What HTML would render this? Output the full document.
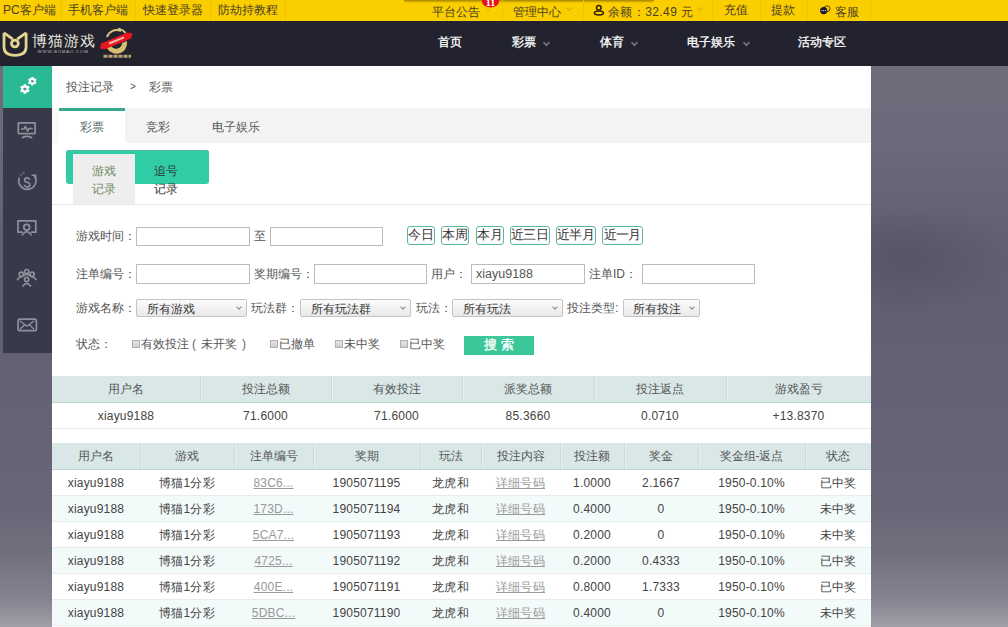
<!DOCTYPE html>
<html><head><meta charset="utf-8">
<style>
*{margin:0;padding:0;box-sizing:border-box}
html,body{width:1008px;height:627px;overflow:hidden}
body{font-family:"Liberation Sans",sans-serif;font-size:12px;color:#555;position:relative;background:#65616f}
.a{position:absolute;white-space:nowrap}
#bg{position:absolute;left:0;top:66px;width:1008px;height:561px;
background:radial-gradient(ellipse 110px 55px at 905px 192px,rgba(74,70,88,.45),rgba(74,70,88,0)),linear-gradient(180deg,#6f6c7c 0%,#6b6879 15%,#636073 30%,#615e70 40%,#646174 55%,#686577 78%,#72707e 87%,#868391 95%,#a09ea6 100%)}
#topbar{position:absolute;left:0;top:0;width:1008px;height:21px;background:#fbce00;color:#4a4124;font-size:12px}
#topbar .a{top:0;line-height:20px}
#topbar i.sep{position:absolute;top:0;width:1px;height:21px;background:#eec300}
#nav{position:absolute;left:0;top:21px;width:1008px;height:45px;background:#23232f}
#nav .a{top:0;line-height:43px;color:#fff;font-size:12.4px;-webkit-text-stroke:0.3px #fff}
.caret{display:inline-block;width:5px;height:5px;border-right:1px solid #888;border-bottom:1px solid #888;transform:rotate(45deg)}
#side{position:absolute;left:3px;top:66px;width:49px;height:287px;background:#393a49}
#side .on{position:absolute;left:0;top:0;width:49px;height:42px;background:#29ba95}
#panel{position:absolute;left:52px;top:66px;width:819px;height:561px;background:#fff}
#panel .a{color:#555}
.inp{position:absolute;height:19px;border:1px solid #bcbcbc;background:#fff}
.sel{position:absolute;height:18px;border:1px solid #c4c4c4;border-radius:2px;background:linear-gradient(#fcfcfc,#e9e9e9);color:#333}
.sel:after{content:"";position:absolute;right:5px;top:5px;width:3px;height:3px;border-right:1.2px solid #8a8a8a;border-bottom:1.2px solid #8a8a8a;transform:rotate(45deg)}
.btn{position:absolute;top:160px;height:19px;border:1px solid #5db7a0;border-radius:3px;color:#333;line-height:16px;text-align:center;font-size:13px;letter-spacing:-0.6px;text-indent:-0.6px}
.chk{display:inline-block;width:8px;height:8px;border:1px solid #b0b0b0;background:linear-gradient(#e4e4e4,#d0d0d0);margin-left:1px;margin-right:1px;vertical-align:0px}
table{position:absolute;left:0;border-collapse:collapse;table-layout:fixed;width:819px}
th{height:26px;background:#d9e8e7;font-weight:normal;color:#555;border-bottom:1px solid #bcd5d0;border-left:1px solid #cadcda;box-shadow:inset 1px 0 0 #e6f0ef;padding:2px 0 0}
th:first-child{border-left:none;box-shadow:none}
td{height:26px;text-align:center;color:#444;letter-spacing:0.2px;border-bottom:1px solid #e4eded;padding:2px 0 0}
tr.c td{background:#f3fafa}
td u{color:#999}
</style></head><body>
<div id="bg"></div>
<div id="topbar">
  <div class="a" style="left:404px;top:0;width:250px;height:3px;background:linear-gradient(rgba(90,70,0,.55),rgba(90,70,0,0));border-radius:0 0 3px 3px"></div>
  <span class="a" style="left:3px">PC客户端</span><i class="sep" style="left:61px"></i>
  <span class="a" style="left:68px">手机客户端</span><i class="sep" style="left:135px"></i>
  <span class="a" style="left:143px">快速登录器</span><i class="sep" style="left:210px"></i>
  <span class="a" style="left:218px">防劫持教程</span><i class="sep" style="left:285px"></i>
  <span class="a" style="left:432px;top:2px">平台公告</span><i class="sep" style="left:502px"></i>
  <span class="a" style="left:513px;top:2px">管理中心</span><i class="sep" style="left:583px"></i>
  <span class="a" style="left:608px;top:2px;letter-spacing:0.4px">余额：32.49 元</span><i class="sep" style="left:712px"></i>
  <span class="a" style="left:724px">充值</span><i class="sep" style="left:760px"></i>
  <span class="a" style="left:771px">提款</span><i class="sep" style="left:807px"></i>
  <span class="a" style="left:835px;top:2px">客服</span><i class="sep" style="left:870px"></i>
  <svg class="a" style="left:480px;top:0" width="22" height="14" viewBox="480 0 22 14">
   <ellipse cx="490.5" cy="1.5" rx="8.5" ry="6" fill="#e8101a"/>
   <text x="490.5" y="6.3" fill="#fff" font-family="Liberation Serif" font-weight="bold" font-size="10" text-anchor="middle">11</text>
   <path d="M486 9.5 L488 11.5 L490 9.5" fill="none" stroke="#d0a800" stroke-width="0.8"/>
  </svg>
  <svg class="a" style="left:565px;top:6px" width="8" height="6" viewBox="0 0 8 6"><path d="M1 1.5 L4 4.5 L7 1.5" fill="none" stroke="#c9a400" stroke-width="1"/></svg>
  <svg class="a" style="left:696px;top:6px" width="8" height="6" viewBox="0 0 8 6"><path d="M1 1.5 L4 4.5 L7 1.5" fill="none" stroke="#c9a400" stroke-width="1"/></svg>
  <svg class="a" style="left:592px;top:3px" width="14" height="14" viewBox="592 3 14 14">
   <circle cx="598.8" cy="7.8" r="2.3" fill="none" stroke="#2a2200" stroke-width="1.5"/>
   <ellipse cx="598.9" cy="13" rx="4.5" ry="1.9" fill="none" stroke="#2a2200" stroke-width="1.5"/>
  </svg>
  <svg class="a" style="left:817px;top:4px" width="16" height="14" viewBox="817 4 16 14">
   <circle cx="827" cy="8.8" r="3" fill="none" stroke="#5a4500" stroke-width="1"/>
   <circle cx="823.7" cy="10.6" r="3.6" fill="#1d1830"/>
   <circle cx="822" cy="10.6" r="0.55" fill="#fff"/><circle cx="823.7" cy="10.6" r="0.55" fill="#fff"/><circle cx="825.4" cy="10.6" r="0.55" fill="#fff"/>
  </svg>
</div>
<div id="nav">
  <svg class="a" style="left:0;top:0" width="140" height="45" viewBox="0 21 140 45">
   <g fill="none" stroke="#e2d592" stroke-width="2.8" stroke-linejoin="round">
    <path d="M4 32.8 V47 Q4 55.3 15 55.3 Q26.1 55.3 26.1 47 V32.8"/>
    <path d="M4 32.8 L12.8 39.2 M26.1 32.8 L17.2 39.2"/>
    <circle cx="14.9" cy="43.5" r="3.4"/>
   </g>
   <text x="32" y="46.3" fill="#ebe7dd" font-size="14.5" font-weight="300" letter-spacing="0.9">博猫游戏</text>
   <text x="37.6" y="53.3" fill="#b9b6b4" font-size="4.4" letter-spacing="0.75" font-family="Liberation Sans">WWW.BOMAO.COM</text>
   <g>
    <path d="M107 37 A10 10 0 0 1 121 31.2" fill="none" stroke="#d8c47c" stroke-width="2"/>
    <path d="M118 28.5 Q123 29.5 125.5 33" fill="none" stroke="#e0cf8e" stroke-width="1.6"/>
    <path d="M106 45 A10.5 10.5 0 0 0 127 41 L122 43 A6 6 0 0 1 111 46 Z" fill="#d7be6c"/>
    <path d="M101 43.5 L127.5 32.5 L132.5 33.2 L131 38.5 L104.5 49.5 L100 48.6 Z" fill="#e5161d"/>
    <path d="M109 43.5 L124 37.3" stroke="#f3b7b7" stroke-width="2"/>
    <path d="M103.5 56.3 H131" stroke="#b8a470" stroke-width="3" stroke-dasharray="4 1"/>
   </g>
  </svg>
  <span class="a" style="left:438px">首页</span>
  <span class="a" style="left:512px">彩票</span><svg class="a" style="left:542px;top:20px" width="9" height="6"><path d="M1.5 1.2 L4.5 4.2 L7.5 1.2" fill="none" stroke="#70707c" stroke-width="1.7"/></svg>
  <span class="a" style="left:600px">体育</span><svg class="a" style="left:630px;top:20px" width="9" height="6"><path d="M1.5 1.2 L4.5 4.2 L7.5 1.2" fill="none" stroke="#70707c" stroke-width="1.7"/></svg>
  <span class="a" style="left:687px">电子娱乐</span><svg class="a" style="left:742px;top:20px" width="9" height="6"><path d="M1.5 1.2 L4.5 4.2 L7.5 1.2" fill="none" stroke="#70707c" stroke-width="1.7"/></svg>
  <span class="a" style="left:798px">活动专区</span>
</div>
<div id="side"><div class="on"></div>
<svg width="49" height="287" style="position:absolute;left:0;top:0" viewBox="3 66 49 287">
 <g fill="#fff">
  <g transform="translate(24.9,89)">
   <circle r="3.6"/>
   <rect x="-1.4" y="-4.8" width="2.8" height="9.6" rx="0.6"/>
   <rect x="-1.4" y="-4.8" width="2.8" height="9.6" rx="0.6" transform="rotate(60)"/>
   <rect x="-1.4" y="-4.8" width="2.8" height="9.6" rx="0.6" transform="rotate(120)"/>
   <circle r="1.6" fill="#4f9a86"/>
  </g>
  <g transform="translate(32.3,81.2)">
   <circle r="3.1"/>
   <rect x="-1.2" y="-4.2" width="2.4" height="8.4" rx="0.5"/>
   <rect x="-1.2" y="-4.2" width="2.4" height="8.4" rx="0.5" transform="rotate(60)"/>
   <rect x="-1.2" y="-4.2" width="2.4" height="8.4" rx="0.5" transform="rotate(120)"/>
   <circle r="1.3" fill="#4f9a86"/>
  </g>
 </g>
 <g fill="none" stroke="#8f8f9d" stroke-width="1.7" stroke-linecap="round" stroke-linejoin="round">
  <rect x="18.3" y="122.8" width="16.8" height="10.8" rx="0.5"/>
  <path d="M21.5 129 L24 129 L25.5 126.5 L27.5 131 L29 128.5 L32 128.5"/>
  <path d="M22.5 137.6 Q27 135 31.5 137.6" stroke-width="1.8"/>
  <path d="M19.2 178 A8.6 8.6 0 1 0 34.8 176.5" />
  <path d="M20.3 175.6 L21.2 174.6 M22.8 173.5 L24.2 172.9" stroke-width="1.2" opacity="0.7"/>
  <path d="M32.2 175.3 L35.6 175.3 L35.6 179" stroke-width="1.6"/>
  <path d="M29.6 179.2 Q28.6 177.9 27 177.9 Q24.6 177.9 24.6 179.9 Q24.6 181.7 27.2 182.3 Q29.9 182.9 29.9 184.7 Q29.9 186.8 27.1 186.8 Q25.3 186.8 24.3 185.4" stroke-width="1.6"/>
  <path d="M27.2 186.8 V188" stroke-width="1.2"/>
  <path d="M22 232.2 H18 V220.8 H35.8 V232.2 H31.5"/>
  <circle cx="26.7" cy="227.3" r="2.9"/>
  <path d="M22.3 234.8 Q26.7 228.5 31.1 234.8"/>
  <circle cx="26.7" cy="271.6" r="2.1"/>
  <circle cx="21.3" cy="274.2" r="2.1"/>
  <circle cx="32.1" cy="274.2" r="2.1"/>
  <circle cx="26.7" cy="279.4" r="2.1"/>
  <path d="M17.5 279.5 Q19 276.8 21.8 277"/>
  <path d="M36 279.5 Q34.5 276.8 31.7 277"/>
  <path d="M23.6 275.7 Q26.7 273.2 29.8 275.7"/>
  <path d="M23 286 Q26.7 280.8 30.5 286"/>
  <rect x="18.1" y="319.2" width="18.3" height="11.5" rx="2"/>
  <path d="M20.5 321.2 L26.9 326.2 L33.5 321.2 M20.5 328.8 L24 325.2 M33.5 328.8 L30 325.2" stroke-width="1.4"/>
 </g>
</svg></div>
<div id="panel">
  <span class="a" style="left:14px;top:13px">投注记录</span>
  <span class="a" style="left:78px;top:15px;font-size:10px">&gt;</span>
  <span class="a" style="left:97px;top:13px">彩票</span>
  <div class="a" style="left:0;top:42px;width:819px;height:35px;background:#f3f3f3"></div><div class="a" style="left:0;top:42px;width:7px;height:35px;background:#f9f9f9"></div>
  <div class="a" style="left:7px;top:42px;width:66px;height:35px;background:#fff;border-top:3px solid #35aa8d"></div>
  <span class="a" style="left:28px;top:53px;color:#4d6663">彩票</span>
  <span class="a" style="left:94px;top:53px">竞彩</span>
  <span class="a" style="left:160px;top:53px">电子娱乐</span>
  <div class="a" style="left:14px;top:84px;width:143px;height:34px;background:#30cca6;border-radius:3px;box-shadow:inset 0 1px 0 #55bca2"></div>
  <div class="a" style="left:21px;top:88px;width:62px;height:50px;background:#eeeeee"></div>
  <span class="a" style="left:40px;top:96px;line-height:18px;color:#6f8a5e;text-align:center">游戏<br>记录</span>
  <span class="a" style="left:102px;top:96px;line-height:18px;color:#333;text-align:center">追号<br>记录</span>
  <div class="a" style="left:0;top:138px;width:819px;height:1px;background:#e6e6e6"></div>

  <span class="a" style="left:24px;top:162px">游戏时间：</span>
  <div class="inp" style="left:84px;top:161px;width:114px"></div>
  <span class="a" style="left:202px;top:162px">至</span>
  <div class="inp" style="left:218px;top:161px;width:113px"></div>
  <div class="btn" style="left:355px;width:28px">今日</div>
  <div class="btn" style="left:389px;width:28px">本周</div>
  <div class="btn" style="left:424px;width:28px">本月</div>
  <div class="btn" style="left:458px;width:40px">近三日</div>
  <div class="btn" style="left:504px;width:40px">近半月</div>
  <div class="btn" style="left:550px;width:41px">近一月</div>

  <span class="a" style="left:24px;top:200px">注单编号：</span>
  <div class="inp" style="left:84px;top:198px;width:114px;height:20px"></div>
  <span class="a" style="left:202px;top:200px">奖期编号：</span>
  <div class="inp" style="left:262px;top:198px;width:113px;height:20px"></div>
  <span class="a" style="left:379px;top:200px">用户：</span>
  <div class="inp" style="left:419px;top:198px;width:114px;height:20px;color:#555;padding-left:4px;line-height:19px;font-size:12.5px">xiayu9188</div>
  <span class="a" style="left:537px;top:200px">注单ID：</span>
  <div class="inp" style="left:590px;top:198px;width:113px;height:20px"></div>

  <span class="a" style="left:24px;top:234px">游戏名称：</span>
  <div class="sel" style="left:84px;top:233px;width:111px"><span class="a" style="left:10px;top:1px;color:#333">所有游戏</span></div>
  <span class="a" style="left:199px;top:234px">玩法群：</span>
  <div class="sel" style="left:248px;top:233px;width:111px"><span class="a" style="left:10px;top:1px;color:#333">所有玩法群</span></div>
  <span class="a" style="left:364px;top:234px">玩法：</span>
  <div class="sel" style="left:400px;top:233px;width:111px"><span class="a" style="left:10px;top:1px;color:#333">所有玩法</span></div>
  <span class="a" style="left:515px;top:234px">投注类型:</span>
  <div class="sel" style="left:571px;top:233px;width:77px"><span class="a" style="left:9px;top:1px;color:#333">所有投注</span></div>

  <span class="a" style="left:24px;top:270px">状态：</span>
  <span class="a" style="left:79px;top:270px"><i class="chk"></i>有效投注<span style="display:inline-block;width:12px;padding-left:3px;color:#666">(</span>未开奖<span style="display:inline-block;width:12px;padding-left:5px;color:#666">)</span></span>
  <span class="a" style="left:217px;top:270px"><i class="chk"></i>已撤单</span>
  <span class="a" style="left:282px;top:270px"><i class="chk"></i>未中奖</span>
  <span class="a" style="left:347px;top:270px"><i class="chk"></i>已中奖</span>
  <div class="a" style="left:412px;top:270px;width:70px;height:19px;background:#3bc799;color:#fff;text-align:center;line-height:18px;font-size:13px;-webkit-text-stroke:0.35px #fff">搜 索</div>

  <table style="top:310px">
    <colgroup><col style="width:148px"><col style="width:131px"><col style="width:131px"><col style="width:132px"><col style="width:132px"><col style="width:145px"></colgroup>
    <tr><th>用户名</th><th>投注总额</th><th>有效投注</th><th>派奖总额</th><th>投注返点</th><th>游戏盈亏</th></tr>
    <tr><td>xiayu9188</td><td>71.6000</td><td>71.6000</td><td>85.3660</td><td>0.0710</td><td>+13.8370</td></tr>
  </table>

  <table style="top:377px">
    <colgroup><col style="width:88px"><col style="width:94px"><col style="width:79px"><col style="width:107px"><col style="width:61px"><col style="width:79px"><col style="width:64px"><col style="width:74px"><col style="width:107px"><col style="width:66px"></colgroup>
    <tr><th>用户名</th><th>游戏</th><th>注单编号</th><th>奖期</th><th>玩法</th><th>投注内容</th><th>投注额</th><th>奖金</th><th>奖金组-返点</th><th>状态</th></tr>
    <tr><td>xiayu9188</td><td>博猫1分彩</td><td><u>83C6...</u></td><td>1905071195</td><td>龙虎和</td><td><u>详细号码</u></td><td>1.0000</td><td>2.1667</td><td>1950-0.10%</td><td>已中奖</td></tr>
    <tr class="c"><td>xiayu9188</td><td>博猫1分彩</td><td><u>173D...</u></td><td>1905071194</td><td>龙虎和</td><td><u>详细号码</u></td><td>0.4000</td><td>0</td><td>1950-0.10%</td><td>未中奖</td></tr>
    <tr><td>xiayu9188</td><td>博猫1分彩</td><td><u>5CA7...</u></td><td>1905071193</td><td>龙虎和</td><td><u>详细号码</u></td><td>0.2000</td><td>0</td><td>1950-0.10%</td><td>未中奖</td></tr>
    <tr class="c"><td>xiayu9188</td><td>博猫1分彩</td><td><u>4725...</u></td><td>1905071192</td><td>龙虎和</td><td><u>详细号码</u></td><td>0.2000</td><td>0.4333</td><td>1950-0.10%</td><td>已中奖</td></tr>
    <tr><td>xiayu9188</td><td>博猫1分彩</td><td><u>400E...</u></td><td>1905071191</td><td>龙虎和</td><td><u>详细号码</u></td><td>0.8000</td><td>1.7333</td><td>1950-0.10%</td><td>已中奖</td></tr>
    <tr class="c"><td>xiayu9188</td><td>博猫1分彩</td><td><u>5DBC...</u></td><td>1905071190</td><td>龙虎和</td><td><u>详细号码</u></td><td>0.4000</td><td>0</td><td>1950-0.10%</td><td>未中奖</td></tr>
  </table>
</div>
</body></html>
